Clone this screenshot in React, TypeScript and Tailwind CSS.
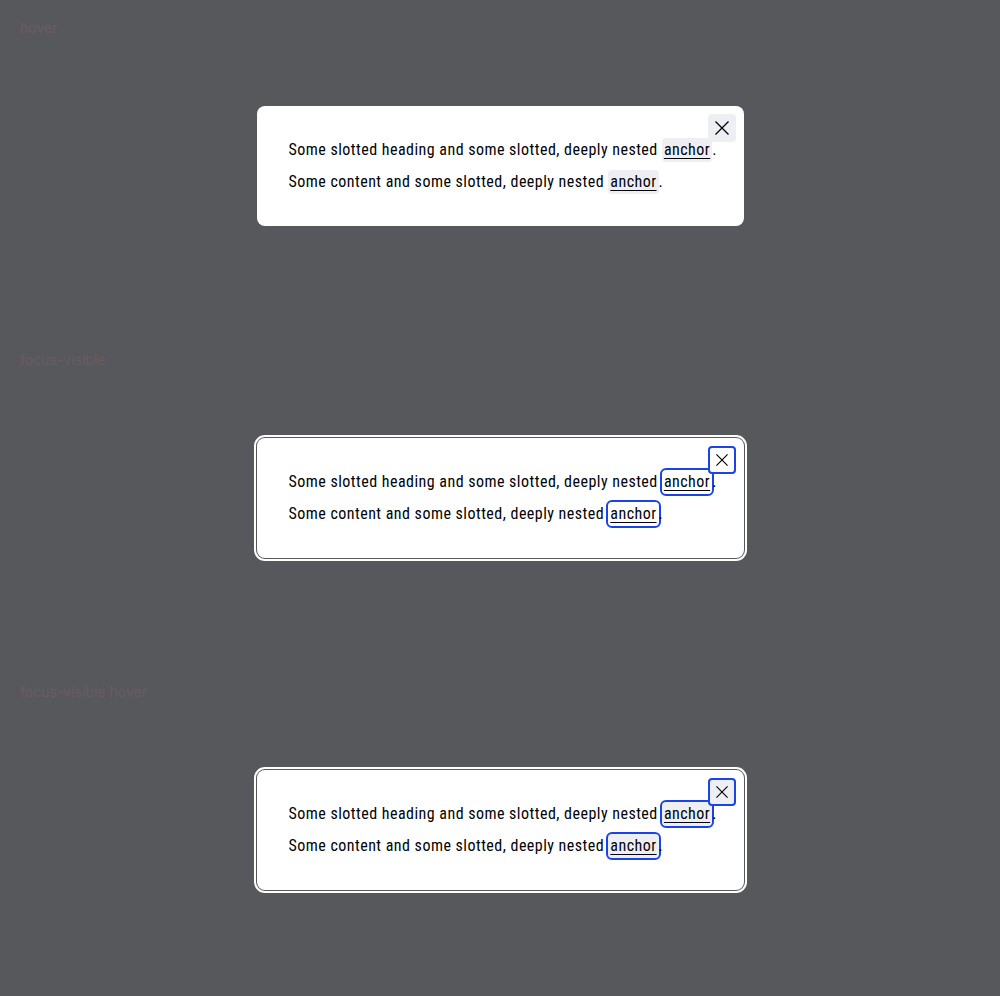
import React from "react";

type State = { hover: boolean; focus: boolean };

function CloseIcon() {
  return (
    <svg width="28" height="28" viewBox="0 0 28 28" fill="none" className="block">
      <path d="M7.5 7.5 L20.5 20.5 M20.5 7.5 L7.5 20.5" stroke="#010205" strokeWidth="1.3" strokeLinecap="butt" />
    </svg>
  );
}

function Anchor({ s }: { s: State }) {
  return (
    <a
      href="#"
      className={
        "inline-block leading-6 rounded-[4px] px-[2px] underline decoration-1 underline-offset-[3px] text-[#010205] " +
        (s.hover ? "bg-[#eeeff2] " : "") +
        (s.focus ? "outline-2 outline-[#1a44ea]" : "")
      }
    >
      anchor
    </a>
  );
}

function Modal({ s }: { s: State }) {
  return (
    <div
      className={
        "col-start-1 row-start-1 self-center justify-self-center relative w-[487px] bg-white rounded-lg px-8 py-8 flex flex-col gap-2 text-[#010205] text-[16px] leading-6 tracking-[0.47px] whitespace-nowrap " +
        (s.focus ? "outline-2 outline-offset-1 outline-white" : "")
      }
      style={{ fontFamily: '"Roboto Condensed", Roboto, sans-serif' }}
    >
      <button
        className={
          "absolute top-2 right-2 w-7 h-7 rounded-[4px] flex items-center justify-center " +
          (s.hover ? "bg-[#eeeff2] " : "bg-white ") +
          (s.focus ? "border-2 border-[#1a44ea]" : "")
        }
      >
        <CloseIcon />
      </button>
      <h2 className="font-normal">
        Some slotted heading and some slotted, deeply nested <Anchor s={s} />.
      </h2>
      <p>
        Some content and some slotted, deeply nested <Anchor s={s} />.
      </p>
    </div>
  );
}

function Section({ label, s }: { label: string; s: State }) {
  return (
    <div className="grid h-[332px]">
      <div
        className="col-start-1 row-start-1 self-start justify-self-start p-4 text-[14px] leading-6 text-[#6b5b65]"
        style={{ fontFamily: "Inter, Roboto, sans-serif" }}
      >
        {label.split(":").map((part, i) =>
          i === 0 ? null : (
            <React.Fragment key={i}>
              <span className="text-[#80405f]">:</span>
              {part}
            </React.Fragment>
          )
        )}
      </div>
      <Modal s={s} />
    </div>
  );
}

export default function App() {
  return (
    <div className="min-h-[996px] bg-[#57585b] flex flex-col">
      <Section label=":hover" s={{ hover: true, focus: false }} />
      <Section label=":focus-visible" s={{ hover: false, focus: true }} />
      <Section label=":focus-visible:hover" s={{ hover: true, focus: true }} />
    </div>
  );
}
